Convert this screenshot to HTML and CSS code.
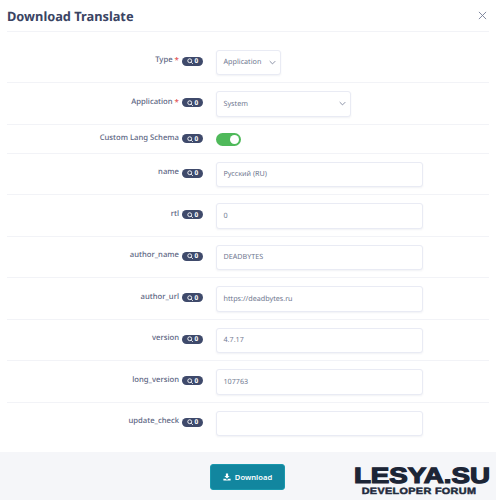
FILE: index.html
```html
<!DOCTYPE html>
<html lang="en">
<head>
    <meta charset="UTF-8">
    <meta name="viewport" content="width=device-width, initial-scale=1.0">
    <title>Download Translate</title>
    <link rel="stylesheet" href="styles.css">
</head>
<body>
    <div class="modal">
        <div class="modal-header">
            <h1>Download Translate</h1>
            <svg class="close" viewBox="0 0 10 10"><path d="M1 1l8 8M9 1l-8 8"/></svg>
        </div>

        <div class="modal-body">
            <div class="row">
                <div class="label">Type <span class="req">*</span> <span class="badge"><svg viewBox="0 0 10 10"><circle cx="4.2" cy="4.2" r="3"/><path d="M6.5 6.5L9 9"/></svg>0</span></div>
                <div class="field select select-small">Application<svg class="chevron" viewBox="0 0 10 6"><path d="M1 1l4 4 4-4"/></svg></div>
            </div>
            <div class="row">
                <div class="label">Application <span class="req">*</span> <span class="badge"><svg viewBox="0 0 10 10"><circle cx="4.2" cy="4.2" r="3"/><path d="M6.5 6.5L9 9"/></svg>0</span></div>
                <div class="field select select-medium">System<svg class="chevron" viewBox="0 0 10 6"><path d="M1 1l4 4 4-4"/></svg></div>
            </div>
            <div class="row row-toggle">
                <div class="label">Custom Lang Schema <span class="badge"><svg viewBox="0 0 10 10"><circle cx="4.2" cy="4.2" r="3"/><path d="M6.5 6.5L9 9"/></svg>0</span></div>
                <div class="toggle"><span class="knob"></span></div>
            </div>
            <div class="row">
                <div class="label">name <span class="badge"><svg viewBox="0 0 10 10"><circle cx="4.2" cy="4.2" r="3"/><path d="M6.5 6.5L9 9"/></svg>0</span></div>
                <div class="field">Русский (RU)</div>
            </div>
            <div class="row">
                <div class="label">rtl <span class="badge"><svg viewBox="0 0 10 10"><circle cx="4.2" cy="4.2" r="3"/><path d="M6.5 6.5L9 9"/></svg>0</span></div>
                <div class="field">0</div>
            </div>
            <div class="row">
                <div class="label">author_name <span class="badge"><svg viewBox="0 0 10 10"><circle cx="4.2" cy="4.2" r="3"/><path d="M6.5 6.5L9 9"/></svg>0</span></div>
                <div class="field">DEADBYTES</div>
            </div>
            <div class="row">
                <div class="label">author_url <span class="badge"><svg viewBox="0 0 10 10"><circle cx="4.2" cy="4.2" r="3"/><path d="M6.5 6.5L9 9"/></svg>0</span></div>
                <div class="field">https://deadbytes.ru</div>
            </div>
            <div class="row">
                <div class="label">version <span class="badge"><svg viewBox="0 0 10 10"><circle cx="4.2" cy="4.2" r="3"/><path d="M6.5 6.5L9 9"/></svg>0</span></div>
                <div class="field">4.7.17</div>
            </div>
            <div class="row">
                <div class="label">long_version <span class="badge"><svg viewBox="0 0 10 10"><circle cx="4.2" cy="4.2" r="3"/><path d="M6.5 6.5L9 9"/></svg>0</span></div>
                <div class="field">107763</div>
            </div>
            <div class="row row-last">
                <div class="label">update_check <span class="badge"><svg viewBox="0 0 10 10"><circle cx="4.2" cy="4.2" r="3"/><path d="M6.5 6.5L9 9"/></svg>0</span></div>
                <div class="field"></div>
            </div>
        </div>

        <div class="modal-footer">
            <button class="download">
                <svg viewBox="0 0 10 10"><path d="M3.6 0.5h2.8v3.2h1.9L5 6.9 1.7 3.7h1.9z"/><path d="M0.5 7.2h2.7L5 8.6l1.8-1.4h2.7v2.3h-9z"/></svg>
                Download
            </button>
            <div class="logo">
                <div class="logo-big">LESYA.SU</div>
                <div class="logo-small">DEVELOPER FORUM</div>
            </div>
        </div>
    </div>
</body>
</html>
```

FILE: styles.css
```css
html, body {
    margin: 0;
    padding: 0;
    height: 500px;
    overflow: hidden;
}

body {
    font-family: 'Noto Sans', 'Open Sans', sans-serif;
    background: #fff;
    color: #4c5573;
    text-rendering: geometricPrecision;
}

.modal {
    height: 500px;
    display: flex;
    flex-direction: column;
}

/* Header */
.modal-header {
    height: 32px;
    margin: 0 7px;
    border-bottom: 1px solid #f2f3f7;
    display: flex;
    align-items: center;
    justify-content: space-between;
    box-sizing: border-box;
}

.modal-header h1 {
    margin: 0 0 -1px;
    font-size: 12.8px;
    font-weight: 700;
    color: #3a4463;
}

.close {
    width: 9px;
    height: 9px;
    margin-right: 2px;
    fill: none;
    stroke: #767e96;
    stroke-width: 1;
}

/* Form rows */
.modal-body {
    flex: 1;
    margin: 0 7px;
    padding-top: 9.5px;
}

.row {
    height: 41.5px;
    box-sizing: border-box;
    padding-top: 8px;
    border-bottom: 1px solid #f2f3f7;
    display: flex;
    gap: 13px;
}

.row-toggle {
    height: 29px;
    padding-top: 8px;
}

.row-toggle .label {
    padding-top: 0;
}

.row-last {
    border-bottom: none;
}

.label {
    width: 196px;
    flex: none;
    display: flex;
    justify-content: flex-end;
    align-items: flex-start;
    gap: 2px;
    padding-top: 5.5px;
    font-size: 7.7px;
    font-weight: 500;
    line-height: 11px;
    color: #5c6582;
    white-space: nowrap;
}

.req {
    color: #e04b4b;
    font-size: 8px;
}

.badge {
    display: flex;
    align-items: center;
    justify-content: center;
    gap: 1px;
    width: 21px;
    height: 9px;
    margin-top: 1.75px;
    margin-left: 1px;
    border-radius: 5px;
    background: #3f4a6b;
    color: #fff;
    font-size: 6.5px;
    font-weight: 700;
    line-height: 8px;
}

.badge svg {
    width: 6.5px;
    height: 6.5px;
    fill: none;
    stroke: #fff;
    stroke-width: 1.4;
}

/* Inputs */
.field {
    width: 207px;
    height: 25.5px;
    box-sizing: border-box;
    padding: 0 6.5px;
    display: flex;
    align-items: center;
    background: #fff;
    border: 1px solid #e9ebf4;
    border-radius: 3px;
    box-shadow: 0 1px 2px rgba(60, 70, 110, 0.07);
    font-size: 7.2px;
    color: #6f7890;
}

.select {
    justify-content: space-between;
}

.select-small {
    width: 65px;
    padding-right: 4px;
}

.select-medium {
    width: 135px;
    padding-right: 4px;
}

.chevron {
    width: 7px;
    height: 5px;
    fill: none;
    stroke: #767e96;
    stroke-width: 1.2;
}

/* Toggle */
.toggle {
    width: 25px;
    height: 13px;
    padding: 2px;
    box-sizing: border-box;
    border-radius: 7px;
    background: #4fb95a;
    display: flex;
    justify-content: flex-end;
}

.knob {
    width: 9px;
    height: 9px;
    border-radius: 50%;
    background: #fff;
}

/* Footer */
.modal-footer {
    position: relative;
    height: 48px;
    background: #f5f6f9;
    box-sizing: border-box;
    padding: 12px 0 0 210px;
}

.download {
    width: 75px;
    height: 25.5px;
    padding: 0;
    display: flex;
    align-items: center;
    justify-content: center;
    gap: 4px;
    border: 1px solid #1a98ad;
    border-radius: 3px;
    background: #12869f;
    color: #fff;
    font-family: inherit;
    font-size: 7.6px;
    font-weight: 600;
}

.download svg {
    width: 8px;
    height: 8px;
    fill: #fff;
}

.logo {
    position: absolute;
    left: 353px;
    top: 14px;
    width: 138px;
    text-align: center;
    color: #1c2536;
    font-family: 'Liberation Sans', Arial, sans-serif;
    font-weight: 700;
    white-space: nowrap;
}

.logo-big {
    font-size: 22px;
    line-height: 20px;
    -webkit-text-stroke: 1.2px #1c2536;
    transform: scaleX(1.26);
}

.logo-small {
    font-size: 9px;
    line-height: 9px;
    margin-top: 1px;
    margin-left: -6px;
    letter-spacing: 0.3px;
    -webkit-text-stroke: 0.5px #2a3346;
    transform: scaleX(1.2);
}
```
